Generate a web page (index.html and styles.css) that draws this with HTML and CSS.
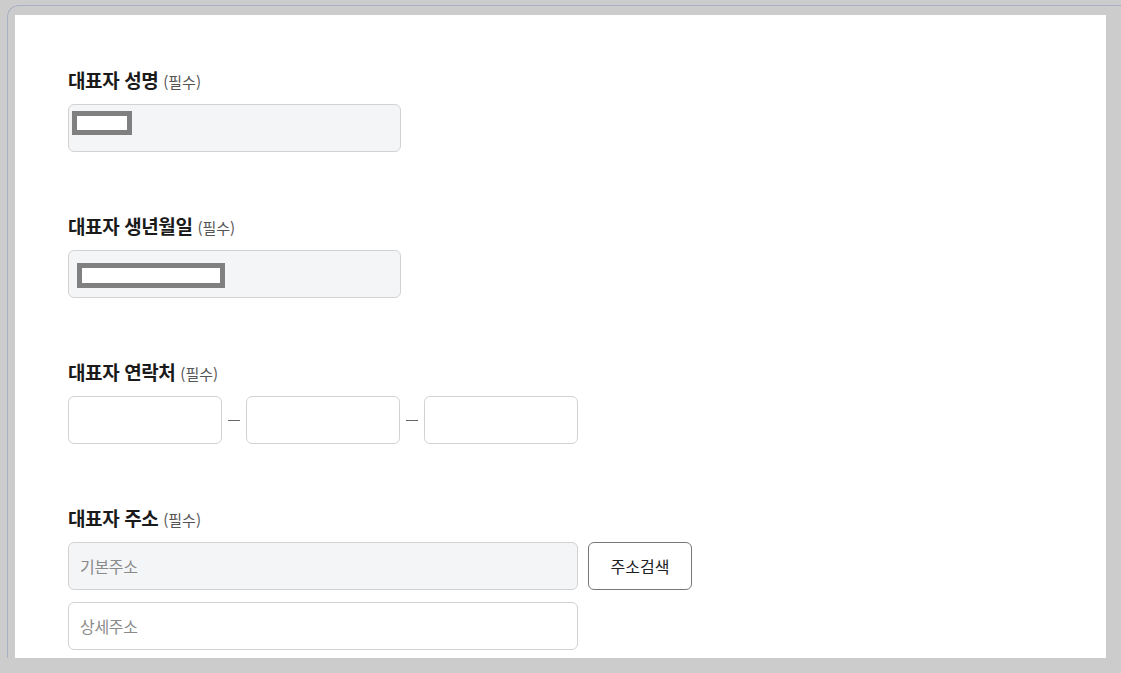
FILE: index.html
```html
<!DOCTYPE html>
<html lang="ko">
<head>
<meta charset="utf-8">
<title>대표자 정보</title>
<link rel="stylesheet" href="styles.css">
</head>
<body>
<div class="frame">
  <div class="panel">
    <div class="field">
      <div class="label">대표자 성명 <span class="req">(필수)</span></div>
      <div class="input readonly short"><span class="mask mask-name"></span></div>
    </div>
    <div class="field">
      <div class="label">대표자 생년월일 <span class="req">(필수)</span></div>
      <div class="input readonly short"><span class="mask mask-birth"></span></div>
    </div>
    <div class="field">
      <div class="label">대표자 연락처 <span class="req">(필수)</span></div>
      <div class="phone-row">
        <input class="input phone" type="text">
        <span class="dash"></span>
        <input class="input phone" type="text">
        <span class="dash"></span>
        <input class="input phone" type="text">
      </div>
    </div>
    <div class="field">
      <div class="label">대표자 주소 <span class="req">(필수)</span></div>
      <div class="addr-row">
        <input class="input readonly wide" type="text" placeholder="기본주소" readonly>
        <button class="btn" type="button">주소검색</button>
      </div>
      <div class="addr-row">
        <input class="input wide" type="text" placeholder="상세주소">
      </div>
    </div>
  </div>
</div>
</body>
</html>
```

FILE: styles.css
```css
* { box-sizing: border-box; }
html, body { margin: 0; padding: 0; }
body {
  background: #cccccc;
  font-family: "Noto Sans CJK KR", "Noto Sans", sans-serif;
  overflow: hidden;
  height: 673px;
}
.frame {
  margin: 5px 0 0 7px;
  border-top: 1px solid #aab0c4;
  border-left: 1px solid #aab0c4;
  border-top-left-radius: 12px;
  padding: 9px 15px 0 7px;
}
.panel {
  background: #ffffff;
  width: 1091px;
  height: 643px;
  overflow: hidden;
  padding: 53px 0 0 53px;
}
.field { margin-bottom: 62px; }
.label {
  font-size: 19px;
  font-weight: 700;
  color: #1a1a1a;
  line-height: 24px;
  height: 24px;
  margin-bottom: 12px;
  letter-spacing: -0.4px;
}
.req {
  font-size: 15px;
  font-weight: 400;
  color: #555555;
  letter-spacing: 0;
}
.input {
  display: block;
  height: 48px;
  border: 1px solid #d2d2d2;
  border-radius: 6px;
  background: #ffffff;
  font-family: inherit;
  font-size: 16px;
  letter-spacing: -0.3px;
  color: #222;
  padding: 0 11px;
  margin: 0;
  outline: none;
}
.input::placeholder { color: #8a8a8a; }
.readonly { background: #f4f5f7; }
.short {
  width: 333px;
  position: relative;
}
.mask {
  position: absolute;
  border: 5px solid #808080;
  background: #ffffff;
}
.mask-name { left: 3px; top: 6px; width: 60px; height: 24px; }
.mask-birth { left: 8px; top: 12px; width: 148px; height: 25px; }
.phone-row { display: flex; align-items: center; }
.phone { width: 154px; }
.dash {
  width: 24px;
  display: flex;
  justify-content: center;
}
.dash::before {
  content: "";
  display: block;
  width: 12px;
  height: 1px;
  background: #666;
}
.addr-row { display: flex; gap: 10px; margin-bottom: 12px; }
.wide { width: 510px; }
.btn {
  width: 104px;
  height: 48px;
  border: 1px solid #777777;
  border-radius: 6px;
  background: #ffffff;
  font-family: inherit;
  font-size: 16px;
  color: #222222;
  padding: 0;
}
```
